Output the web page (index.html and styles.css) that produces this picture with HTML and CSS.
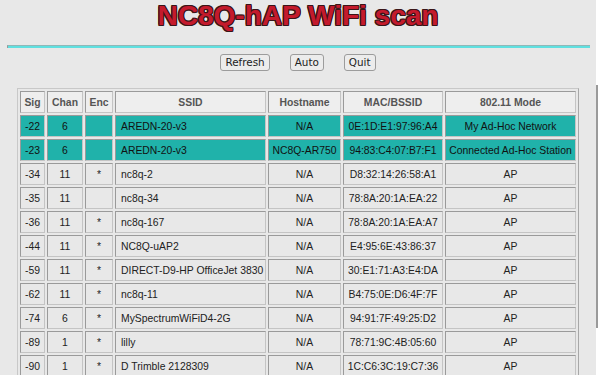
FILE: index.html
```html
<!DOCTYPE html>
<html>
<head>
<meta charset="utf-8">
<title>NC8Q-hAP WiFi scan</title>
<link rel="stylesheet" href="styles.css">
</head>
<body>
<div class="page">
  <h1 class="title">NC8Q-hAP WiFi scan</h1>
  <hr class="rule">
  <div class="actions">
    <button class="btn">Refresh</button>
    <button class="btn">Auto</button>
    <button class="btn">Quit</button>
  </div>
  <table class="scan">
    <colgroup>
      <col class="c-sig"><col class="c-chan"><col class="c-enc"><col class="c-ssid"><col class="c-host"><col class="c-mac"><col class="c-mode">
    </colgroup>
    <thead>
      <tr><th>Sig</th><th>Chan</th><th>Enc</th><th>SSID</th><th>Hostname</th><th>MAC/BSSID</th><th>802.11 Mode</th></tr>
    </thead>
    <tbody>
      <tr class="mesh"><td>-22</td><td>6</td><td></td><td class="ssid">AREDN-20-v3</td><td>N/A</td><td>0E:1D:E1:97:96:A4</td><td>My Ad-Hoc Network</td></tr>
      <tr class="mesh"><td>-23</td><td>6</td><td></td><td class="ssid">AREDN-20-v3</td><td>NC8Q-AR750</td><td>94:83:C4:07:B7:F1</td><td>Connected Ad-Hoc Station</td></tr>
      <tr><td>-34</td><td>11</td><td>*</td><td class="ssid">nc8q-2</td><td>N/A</td><td>D8:32:14:26:58:A1</td><td>AP</td></tr>
      <tr><td>-35</td><td>11</td><td></td><td class="ssid">nc8q-34</td><td>N/A</td><td>78:8A:20:1A:EA:22</td><td>AP</td></tr>
      <tr><td>-36</td><td>11</td><td>*</td><td class="ssid">nc8q-167</td><td>N/A</td><td>78:8A:20:1A:EA:A7</td><td>AP</td></tr>
      <tr><td>-44</td><td>11</td><td>*</td><td class="ssid">NC8Q-uAP2</td><td>N/A</td><td>E4:95:6E:43:86:37</td><td>AP</td></tr>
      <tr><td>-59</td><td>11</td><td>*</td><td class="ssid">DIRECT-D9-HP OfficeJet 3830</td><td>N/A</td><td>30:E1:71:A3:E4:DA</td><td>AP</td></tr>
      <tr><td>-62</td><td>11</td><td>*</td><td class="ssid">nc8q-11</td><td>N/A</td><td>B4:75:0E:D6:4F:7F</td><td>AP</td></tr>
      <tr><td>-74</td><td>6</td><td>*</td><td class="ssid">MySpectrumWiFiD4-2G</td><td>N/A</td><td>94:91:7F:49:25:D2</td><td>AP</td></tr>
      <tr><td>-89</td><td>1</td><td>*</td><td class="ssid">lilly</td><td>N/A</td><td>78:71:9C:4B:05:60</td><td>AP</td></tr>
      <tr><td>-90</td><td>1</td><td>*</td><td class="ssid">D Trimble 2128309</td><td>N/A</td><td>1C:C6:3C:19:C7:36</td><td>AP</td></tr>
    </tbody>
  </table>
</div>
<div class="rail"><div class="thumb"></div></div>
</body>
</html>
```
FILE: styles.css
```css
html {
  overflow: hidden;
  background: #e8e8e8;
}
body {
  margin: 0;
  display: flex;
  height: 375px;
  font-family: "Liberation Sans", Arial, sans-serif;
  color: #222;
}
.page {
  flex: 1;
  min-width: 0;
}
.rail {
  width: 4px;
  background: #ffffff;
}
.thumb {
  margin-top: 85px;
  width: 2px;
  height: 243px;
  background: #9a9a9a;
}
.title {
  margin: 2px 0 0;
  font-size: 28px;
  line-height: 28px;
  font-weight: bold;
  text-align: center;
  color: #c41a2c;
  text-shadow: 1px 0 0 #3a1518, -1px 0 0 #3a1518, 0 1px 0 #3a1518, 0 -1px 0 #3a1518,
    1px 1px 0 #3a1518, -1px -1px 0 #3a1518, 1px -1px 0 #3a1518, -1px 1px 0 #3a1518;
}
.rule {
  margin: 15px 6px 0 7px;
  height: 2px;
  border: 0;
  border-top: 1px solid #8fb8b8;
  border-left: 1px solid #9a9a9a;
  background: #5fe0e0;
}
.actions {
  display: flex;
  justify-content: center;
  gap: 20px;
  margin-top: 6px;
}
.btn {
  font-family: "DejaVu Sans", sans-serif;
  font-size: 10.4px;
  line-height: 15px;
  height: 17px;
  padding: 0 4px;
  color: #222;
  background: #ececec;
  border: 1px solid #9c9c9c;
  border-radius: 3px;
}
.scan {
  margin: 17px 0 0 17px;
  width: 562px;
  table-layout: fixed;
  border-collapse: separate;
  border-spacing: 2px;
  border: 1px solid #c8c8c8;
  border-right-color: #a8a8a8;
  border-bottom-color: #a8a8a8;
  font-size: 10.4px;
}
.c-sig { width: 25px; }
.c-chan { width: 36px; }
.c-enc { width: 28px; }
.c-ssid { width: 151px; }
.c-host { width: 73px; }
.c-mac { width: 100px; }
.c-mode { width: 131px; }
.scan th,
.scan td {
  height: 22px;
  box-sizing: border-box;
  padding: 0 1px;
  text-align: center;
  white-space: nowrap;
  overflow: hidden;
  border: 1px solid #9a9a9a;
  border-right-color: #c4c4c4;
  border-bottom-color: #c4c4c4;
  background: #e8e8e8;
}
.scan th {
  color: #555;
  font-weight: bold;
  background: #eeeeee;
}
.scan td.ssid {
  text-align: left;
  padding-left: 5px;
}
.scan tr.mesh td {
  background: #20b2aa;
  color: #111;
}
```
